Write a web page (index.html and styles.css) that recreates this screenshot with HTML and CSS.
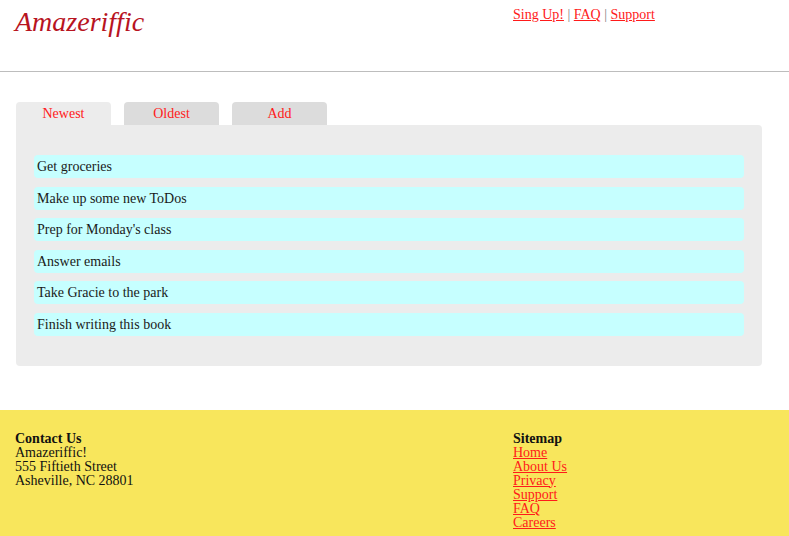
FILE: index.html
```html
<!DOCTYPE html>
<html>
<head>
<meta charset="utf-8">
<title>Amazeriffic</title>
<link rel="stylesheet" href="styles.css">
</head>
<body>
<header class="header">
  <div class="cols">
    <h1 class="logo">Amazeriffic</h1>
    <nav class="nav"><a href="#">Sing Up!</a> <span class="sep">|</span> <a href="#">FAQ</a> <span class="sep">|</span> <a href="#">Support</a></nav>
  </div>
</header>
<main class="main">
  <div class="tabs">
    <a class="tab active" href="#">Newest</a>
    <a class="tab" href="#">Oldest</a>
    <a class="tab" href="#">Add</a>
  </div>
  <div class="panel">
    <ul class="todos">
      <li>Get groceries</li>
      <li>Make up some new ToDos</li>
      <li>Prep for Monday's class</li>
      <li>Answer emails</li>
      <li>Take Gracie to the park</li>
      <li>Finish writing this book</li>
    </ul>
  </div>
</main>
<footer class="footer">
  <div class="cols">
    <div class="contact">
      <strong>Contact Us</strong><br>
      Amazeriffic!<br>
      555 Fiftieth Street<br>
      Asheville, NC 28801
    </div>
    <div class="sitemap">
      <strong>Sitemap</strong>
      <a href="#">Home</a>
      <a href="#">About Us</a>
      <a href="#">Privacy</a>
      <a href="#">Support</a>
      <a href="#">FAQ</a>
      <a href="#">Careers</a>
    </div>
  </div>
</footer>
</body>
</html>
```

FILE: styles.css
```css
html, body {
  margin: 0;
  padding: 0;
  background: #fff;
}
body {
  font-family: "Liberation Serif", "Times New Roman", serif;
  font-size: 14px;
  line-height: 14px;
  color: #111;
}
a {
  color: #ff1a1a;
}
.cols {
  display: grid;
  grid-template-columns: 498px 1fr;
  padding-left: 15px;
}
.header {
  height: 71px;
  border-bottom: 1px solid #bdbdbd;
}
.logo {
  margin: 0;
  padding-top: 8px;
  font-size: 28px;
  line-height: 28px;
  font-weight: normal;
  font-style: italic;
  color: #b8141f;
}
.nav {
  padding-top: 7px;
  line-height: 16px;
}
.sep {
  color: #808080;
}
.main {
  padding: 30px 27px 0 16px;
}
.tabs {
  display: flex;
  gap: 13px;
}
.tab {
  width: 95px;
  height: 23px;
  line-height: 23px;
  text-align: center;
  background: #dcdcdc;
  border-radius: 4px 4px 0 0;
  text-decoration: none;
  color: #ff1a1a;
}
.tab.active {
  background: #ececec;
}
.panel {
  background: #ececec;
  border-radius: 0 4px 4px 4px;
  padding: 30px 18px 30px 18px;
}
.todos {
  list-style: none;
  margin: 0;
  padding: 0;
  display: flex;
  flex-direction: column;
  gap: 8.5px;
}
.todos li {
  background: #c6ffff;
  border-radius: 4px;
  height: 23px;
  line-height: 24px;
  padding-left: 3px;
  color: #1a1a1a;
}
.footer {
  margin-top: 44px;
  background: #f8e65c;
  padding: 22px 0 20px;
  color: #111;
}
.sitemap {
  display: flex;
  flex-direction: column;
  align-items: flex-start;
}
```
